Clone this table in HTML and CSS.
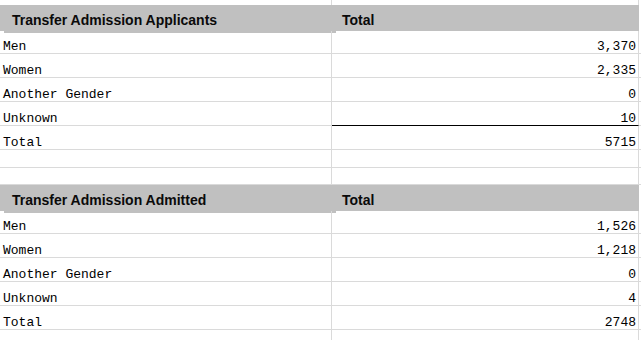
FILE: index.html
```html
<!DOCTYPE html>
<html>
<head>
<meta charset="utf-8">
<link rel="stylesheet" href="styles.css">
</head>
<body>
<div class="sheet">
  <div class="row r-top"><div class="c c1"></div><div class="c c2"></div><div class="c c3"></div></div>

  <div class="row r-head"><div class="c c1 h">Transfer Admission Applicants</div><div class="c c2 h">Total</div><div class="c c3"></div></div>
  <div class="row r-first"><div class="c c1">Men</div><div class="c c2 num">3,370</div><div class="c c3"></div></div>
  <div class="row"><div class="c c1">Women</div><div class="c c2 num">2,335</div><div class="c c3"></div></div>
  <div class="row"><div class="c c1">Another Gender</div><div class="c c2 num">0</div><div class="c c3"></div></div>
  <div class="row"><div class="c c1">Unknown</div><div class="c c2 num underline">10</div><div class="c c3"></div></div>
  <div class="row"><div class="c c1">Total</div><div class="c c2 num">5715</div><div class="c c3"></div></div>

  <div class="row r-blank1"><div class="c c1"></div><div class="c c2"></div><div class="c c3"></div></div>
  <div class="row r-blank2"><div class="c c1"></div><div class="c c2"></div><div class="c c3"></div></div>

  <div class="row r-head"><div class="c c1 h">Transfer Admission Admitted</div><div class="c c2 h">Total</div><div class="c c3"></div></div>
  <div class="row r-first"><div class="c c1">Men</div><div class="c c2 num">1,526</div><div class="c c3"></div></div>
  <div class="row"><div class="c c1">Women</div><div class="c c2 num">1,218</div><div class="c c3"></div></div>
  <div class="row"><div class="c c1">Another Gender</div><div class="c c2 num">0</div><div class="c c3"></div></div>
  <div class="row"><div class="c c1">Unknown</div><div class="c c2 num">4</div><div class="c c3"></div></div>
  <div class="row"><div class="c c1">Total</div><div class="c c2 num">2748</div><div class="c c3"></div></div>

  <div class="row"><div class="c c1"></div><div class="c c2"></div><div class="c c3"></div></div>
</div>
</body>
</html>
```

FILE: styles.css
```css
html, body {
  margin: 0;
  padding: 0;
  background: #ffffff;
}

.sheet {
  width: 641px;
  height: 340px;
  overflow: hidden;
  font-family: "Liberation Mono", "DejaVu Sans Mono", monospace;
  font-size: 13px;
  color: #000;
}

.row {
  display: flex;
  height: 24px;
  box-sizing: border-box;
}

.c {
  box-sizing: border-box;
  border-right: 1px solid #dadada;
  border-bottom: 1px solid #dadada;
  display: flex;
  align-items: flex-end;
  line-height: 13px;
  white-space: nowrap;
}

.c1 { width: 332px; padding-left: 3px; }
.c2 { width: 307px; padding-right: 2px; }
.c3 { flex: 1; border-right: none; }

.num { justify-content: flex-end; }

.underline { border-bottom-color: #000; }

.r-top { height: 5px; }
.r-top .c { border-bottom: none; }

.r-first { height: 23px; }
.r-blank1 { height: 18px; }
.r-blank2 { height: 17px; }

.r-head { height: 26px; }
.r-head .c { border-bottom: none; }

.h {
  background: #c0c0c0;
  border-right-color: #c0c0c0;
  font-family: "Liberation Sans", Arial, sans-serif;
  font-weight: bold;
  font-size: 14px;
  line-height: 18px;
  align-items: flex-start;
  padding-top: 6px;
  color: #0a0a0a;
}

.c1.h {
  padding-left: 12px;
  box-shadow: 4px 2px 0 #c0c0c0;
}

.c2.h {
  padding-left: 10px;
}
```
